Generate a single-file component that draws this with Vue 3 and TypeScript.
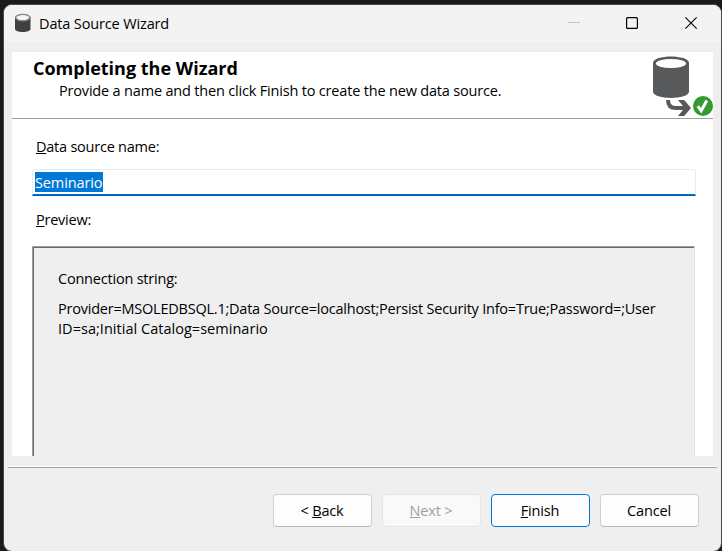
<script setup lang="ts">
import { ref } from 'vue'

interface WizardButton {
  before: string
  key: string
  after: string
  kind: 'normal' | 'disabled' | 'primary'
}

const dataSourceName = ref('Seminario')
const buttons: WizardButton[] = [
  { before: '< ', key: 'B', after: 'ack', kind: 'normal' },
  { before: '', key: 'N', after: 'ext >', kind: 'disabled' },
  { before: '', key: 'F', after: 'inish', kind: 'primary' },
  { before: 'Cancel', key: '', after: '', kind: 'normal' },
]
</script>

<template>
  <div class="desktop">
    <div class="window">
      <header class="titlebar">
        <svg class="app-icon" width="18" height="20" viewBox="0 0 18 20">
          <path d="M1 4v12c0 4 15.500 4 15.500 0V4z" fill="#404040" />
          <ellipse cx="8.750" cy="4.600" rx="7.100" ry="3.200" fill="#f4f4f4" stroke="#858585" stroke-width="1.400" />
        </svg>
        <span class="title">Data Source Wizard</span>
        <svg class="controls" width="132" height="16" viewBox="0 0 132 16" fill="none">
          <path d="M0 7.5h12" stroke="#c3c3c3" />
          <rect x="58.6" y="2.6" width="10.8" height="10.8" rx="1" stroke="#000" stroke-width="1.2" />
          <path d="M117.3 2.3l11.4 11.4M128.7 2.3l-11.4 11.4" stroke="#000" stroke-width="1.1" />
        </svg>
      </header>

      <main class="page">
        <section class="intro">
          <div class="intro-text">
            <h1>Completing the Wizard</h1>
            <p>Provide a name and then click Finish to create the new data source.</p>
          </div>
          <svg class="source-icon" width="61" height="62" viewBox="0 0 61 62">
            <path d="M1 7C1 -1.600 37 -1.600 37 7V35.500C37 44 1 44 1 35.500Z" fill="#58595b" />
            <ellipse cx="19" cy="7.500" rx="15.100" ry="4.500" fill="#fff" />
            <path d="M16 44c0 5.800 3 8 8 8h12" fill="none" stroke="#58595b" stroke-width="4" />
            <path d="M26 44h6.200L39 52l-6.800 8H26l6.600-8z" fill="#58595b" />
            <circle cx="51" cy="50" r="10" fill="#339933" />
            <path d="M45.800 50.200l3.400 4.600 5.600-10.300" fill="none" stroke="#fff" stroke-width="3" />
          </svg>
        </section>

        <section class="form">
          <label class="label name-label"><u>D</u>ata source name:</label>
          <div class="input"><span class="selection">{{ dataSourceName }}</span></div>
          <div class="label preview-label"><u>P</u>review:</div>
          <div class="preview">
            <p class="caption">Connection string:</p>
            <p class="connection">Provider=MSOLEDBSQL.1;Data Source=localhost;Persist Security Info=True;Password=;User</p>
            <p class="connection second">ID=sa;Initial Catalog=seminario</p>
          </div>
        </section>
      </main>

      <footer class="footer">
        <button v-for="b in buttons" :key="b.before + b.key" :class="['btn', b.kind]">{{ b.before }}<u v-if="b.key">{{ b.key }}</u>{{ b.after }}</button>
      </footer>
    </div>
  </div>
</template>

<style>
body { margin: 0; background: #1c1a19; }
</style>

<style scoped>
* { box-sizing: border-box; }
h1, p { margin: 0; }
.desktop {
  width: 722px;
  height: 551px;
  padding: 4px 0 0 3px;
  background: #1c1a19;
  font: 14.5px/20px "Open Sans", sans-serif;
  color: #000;
  overflow: hidden;
}
.window {
  width: 719px;
  height: 548px;
  border: 1px solid #484848;
  border-radius: 9px;
  background: #efefef;
  overflow: hidden;
  white-space: nowrap;
}
.titlebar {
  height: 37px;
  padding-left: 10px;
  display: flex;
  align-items: flex-start;
  background: #f3f3f3;
}
.app-icon { margin-top: 8px; }
.title { margin: 9px 0 0 7px; letter-spacing: -0.14px; }
.controls { margin: 10px 21px 0 auto; }
.page {
  width: 701px;
  height: 404px;
  margin: 10px 0 0 8px;
  background: #fff;
  overflow: hidden;
}
.intro {
  height: 67px;
  display: flex;
  justify-content: space-between;
  border-bottom: 1px solid #a0a0a0;
}
.intro-text { padding: 4px 0 0 21px; }
h1 { font-size: 18px; line-height: 24px; font-weight: 700; letter-spacing: 0; }
.intro-text p { padding: 1px 0 0 26px; letter-spacing: -0.182px; }
.source-icon { margin-top: 4px; }
u {
  text-decoration: underline;
  text-decoration-thickness: 1px;
  text-underline-offset: 1px;
  text-decoration-skip-ink: none;
}
.form { padding: 18px 0 0 20px; }
.label { display: block; padding-left: 4px; letter-spacing: -0.23px; }
.input {
  width: 664px;
  height: 27px;
  margin-top: 12px;
  padding: 2px 0 0 2px;
  border: 1px solid #ececec;
  border-bottom: 2px solid #0067c0;
  border-radius: 2px 2px 0 0;
}
.selection {
  display: block;
  width: 68px;
  height: 20px;
  line-height: 22px;
  background: #0078d7;
  color: #fff;
  letter-spacing: -0.12px;
}
.preview-label { margin-top: 14px; }
.preview {
  width: 663px;
  height: 230px;
  margin-top: 16px;
  padding: 22px 0 0 25px;
  background: #efefef;
  border: 1px solid #a0a0a0;
  border-right-color: #e3e3e3;
  box-shadow: inset 1px 1px #696969;
}
.caption { letter-spacing: -0.21px; }
.connection { margin-top: 10px; letter-spacing: -0.225px; }
.connection.second { margin-top: 0; letter-spacing: 0.03px; }
.footer {
  width: 709px;
  margin: 11px 0 0 4px;
  padding: 26px 18px 0 0;
  display: flex;
  justify-content: flex-end;
  gap: 10px;
  border-top: 1px solid #a0a0a0;
  box-shadow: 0 -1px #fff;
}
.btn {
  width: 99px;
  height: 33px;
  padding: 0 1px 0 0;
  border: 1px solid #d0d0d0;
  border-bottom-color: #bababa;
  border-radius: 4px;
  background: #fdfdfd;
  color: #000;
  font: inherit;
  letter-spacing: -0.15px;
}
.btn.disabled { border-color: #e5e5e5; background: #f9f9f9; color: #a0a0a0; }
.btn.primary { border-color: #0078d4; }
</style>
